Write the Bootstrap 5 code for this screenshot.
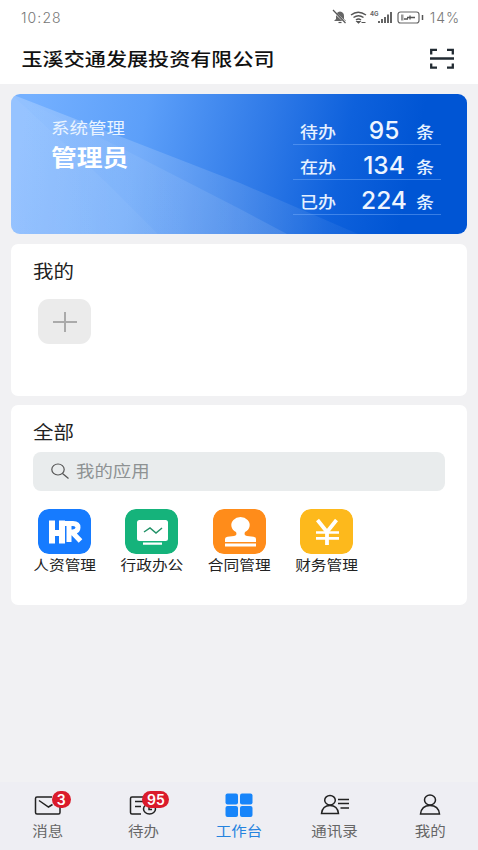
<!DOCTYPE html>
<html lang="zh-CN">
<head>
<meta charset="utf-8">
<meta name="viewport" content="width=device-width, initial-scale=1">
<title>工作台</title>
<link href="https://cdn.jsdelivr.net/npm/bootstrap@5.3.0/dist/css/bootstrap.min.css" rel="stylesheet">
<style>
body{font-family:Inter,"Noto Sans CJK SC",sans-serif;background:#f1f1f3;height:850px;overflow:hidden;color:#222}
svg{display:block;flex:none}
/* wide lettering: glyphs are shorter than they are broad */
.wide{display:inline-block;line-height:1;white-space:nowrap;transform:scaleY(.86);font-family:"Noto Sans CJK SC",sans-serif}
.status{height:34px;padding:0 18px 0 21px;color:#777;font-size:14px;font-weight:300;letter-spacing:.9px}
.status>span:first-child{letter-spacing:1.1px}
.topbar{height:50px;padding:0 24px 0 21.5px}
.topbar .wide{font-size:21.1px;font-weight:500;color:#111}
.content{padding:10px 11px 0 11px}
.hero{height:140px;border-radius:9px;color:#fff}
.hero-art{left:0;top:0}
.who{padding:23.500px 0 0 40px}
.who .dept{font-size:18.5px;color:#eaf4ff}
.who .name{font-size:25.8px;font-weight:700;margin-top:8px}
.stats{width:148px;margin:15.5px 26px 0 0}
.stat{height:35px;border-bottom:1px solid rgba(125,178,250,.45);padding:8px 7px 0 7px;font-size:18px}
.stat .wide{font-weight:500;color:#e6f1ff}
.stat .num{font-size:24.5px;font-weight:500;line-height:1;width:52px;margin-left:16px;color:#eef5ff}
.panel{border-radius:7px;background:#fff;margin-top:9.5px;padding:16px 22px 0}
.panel h2{display:block;font-size:20.5px;margin:0;color:#222;font-weight:400}
.mine{height:152px}.all{height:200px}
.add{width:53px;height:45px;border-radius:11px;background:#ebebeb;margin:19px 0 0 5px}
.search{height:39px;border-radius:8px;background:#e9eced;margin-top:10px;padding-left:18px;gap:8px;color:#8e9293;font-size:18.4px}
.search .wide{margin-top:-1px;margin-left:-1px}
.apps{margin:18px 0 0 -12px}
.app{width:87.3px;font-size:15.7px;color:#222}
.tile{width:53px;height:45px;border-radius:11px;margin-bottom:3.500px}
.tabs{height:68px;background:#eeeef3;font-size:15.5px;color:#666;padding-top:9px}
.tabs .nav-link{color:#666;padding:0;flex:1 1 0;border:0}
.tabs .nav-link.active{color:#2583df}
.tabs .wide{margin-top:4px}
.count{top:0;height:17px;width:19px;border-radius:9px;background:#da1b2b;color:#fff;font-size:14px;font-weight:600;line-height:17px;margin-left:4px}
.count.two{width:27px;margin-left:-1px}
.ico{height:28px}
</style>
<script src="https://cdn.jsdelivr.net/npm/bootstrap@5.3.0/dist/js/bootstrap.bundle.min.js"></script>
</head>
<body class="d-flex flex-column">
<header class="bg-white">
  <div class="status d-flex align-items-center justify-content-between">
    <span>10:28</span>
    <span class="d-flex align-items-center">
      <svg width="95" height="18" viewBox="0 0 95 18" fill="none" stroke="#555" stroke-width="1.2">
        <path d="M3 13 5 11V8q0-4 4-4.500 4 .5 4 4.500v3l2 2Z" fill="#666" stroke="none"/><path d="M7.500 14.500h3" /><path d="m2 3 13 12" stroke="#fff" stroke-width="2"/><path d="m2 2 12.500 13"/>
        <path d="M20 7q7-5.500 15 0M22.500 9.500q5-3.500 10 0M25 12q2.500-2 5 0" stroke-width="1.500"/><path d="m26 13.500 1.500 1.500 1.500-1.500Z" fill="#555"/><path d="M30.500 14.500h4" stroke-width="1"/>
        <text x="39" y="8" font-size="6" font-weight="700" letter-spacing="0" fill="#666" stroke="none" font-family="Inter">4G</text>
        <path d="M48 15v-2M51 15v-4M54 15V9M57 15V6.500M60 15V4" stroke-width="1.800"/>
        <rect x="67" y="4" width="21" height="11" rx="2.500" stroke="#666"/><path d="M91.500 7v5" stroke-width="1.500"/><path d="M70 6.500h2.500v6H70Z" fill="#999" stroke="none"/><path d="M73 11h4M76 9.500h8M79 7.500v4" stroke-width="1.300"/>
      </svg>
      <span class="ms-1">14%</span>
    </span>
  </div>
  <div class="topbar d-flex align-items-center justify-content-between">
    <span class="wide">玉溪交通发展投资有限公司</span>
    <svg width="24" height="22" viewBox="0 0 24 22" fill="none" stroke="#222b33" stroke-width="2.300"><path d="M1.200 6.500V1.800H7M17 1.800h5.800V6.500M1.200 15.500v4.200H7M17 19.700h5.800V15.500M0 10.500h24"/></svg>
  </div>
</header>
<main class="content flex-grow-1">
  <section class="hero position-relative overflow-hidden">
    <svg class="hero-art position-absolute" width="456" height="140" viewBox="0 0 456 140">
      <defs>
        <linearGradient id="sky" gradientUnits="userSpaceOnUse" x1="20" y1="0" x2="400" y2="80"><stop stop-color="#74b0ff"/><stop offset=".3" stop-color="#5c9ff9"/><stop offset=".62" stop-color="#2e79e7"/><stop offset=".82" stop-color="#0e61dc"/><stop offset="1" stop-color="#0055d4"/></linearGradient>
        <linearGradient id="beam" x1="0" x2="1"><stop stop-color="#fff" stop-opacity=".22"/><stop offset=".6" stop-color="#fff" stop-opacity=".12"/><stop offset="1" stop-color="#fff" stop-opacity=".04"/></linearGradient>
        <linearGradient id="beam2" x1="0" x2="1"><stop stop-color="#fff" stop-opacity="0"/><stop offset=".6" stop-color="#fff" stop-opacity=".08"/><stop offset="1" stop-color="#fff" stop-opacity=".1"/></linearGradient>
      </defs>
      <path fill="url(#sky)" d="M0 0h456v140H0z"/>
      <path fill="url(#beam)" d="M0 0 229 89 347 140H0z"/>
      <path fill="url(#beam2)" d="M0 0 114 56 229 115 276 140H0z"/>
      <path fill="#fff" fill-opacity=".045" d="M0 0 95 88 147 140H0z"/>
    </svg>
    <div class="position-relative d-flex justify-content-between">
      <div class="who d-flex flex-column align-items-start">
        <span class="wide dept">系统管理</span>
        <strong class="wide name">管理员</strong>
      </div>
      <div class="stats">
        <div class="stat d-flex justify-content-between align-items-center"><span class="wide">待办</span><span class="num text-center">95</span><span class="wide">条</span></div>
        <div class="stat d-flex justify-content-between align-items-center"><span class="wide">在办</span><span class="num text-center">134</span><span class="wide">条</span></div>
        <div class="stat d-flex justify-content-between align-items-center"><span class="wide">已办</span><span class="num text-center">224</span><span class="wide">条</span></div>
      </div>
    </div>
  </section>
  <section class="panel mine">
    <h2 class="wide">我的</h2>
    <div class="add d-flex align-items-center justify-content-center"><svg width="24" height="20" viewBox="0 0 24 20" stroke="#aaa" stroke-width="2"><path d="M0 10h24M12 0v20"/></svg></div>
  </section>
  <section class="panel all">
    <h2 class="wide">全部</h2>
    <div class="search d-flex align-items-center">
      <svg width="18" height="16" viewBox="0 0 18 16" fill="none" stroke="#555" stroke-width="1.200"><ellipse cx="7" cy="6.500" rx="6.200" ry="5.500"/><path d="m11.500 10.500 6 5"/></svg>
      <span class="wide">我的应用</span>
    </div>
    <div class="apps d-flex">
      <div class="app d-flex flex-column align-items-center">
        <svg class="tile" viewBox="0 0 53 45"><rect width="53" height="45" rx="11" fill="#167bff"/><path d="M14 11.500v23M24 11.500v23M14 24H24" fill="none" stroke="#fff" stroke-width="6"/><path d="M24 14.500h11q5 0 5 4t-5 4.500h-5M31 15v18M34 23l8.500 9" fill="none" stroke="#fff" stroke-width="5"/></svg>
        <span class="wide">人资管理</span></div>
      <div class="app d-flex flex-column align-items-center">
        <svg class="tile" viewBox="0 0 53 45"><rect width="53" height="45" rx="11" fill="#15b37b"/><rect x="12" y="11" width="31" height="21" rx="2.500" fill="#fff"/><path d="m19 23 6-4 6 5 6-5" fill="none" stroke="#239268" stroke-width="1.500"/><path d="M18 34.700h19" stroke="#fff" stroke-width="2.200"/></svg>
        <span class="wide">行政办公</span></div>
      <div class="app d-flex flex-column align-items-center">
        <svg class="tile" viewBox="0 0 53 45"><rect width="53" height="45" rx="11" fill="#ff8c1a"/><path d="M12 33v-3q0-2 2.500-2.300l6.500-.7q3.500-.5 2-4a9.200 8 0 1 1 9 0q-1.500 3.500 2 4l6.500.7q2.500.3 2.500 2.300v3ZM12 34.600h31v2.800H12Z" fill="#fff"/></svg>
        <span class="wide">合同管理</span></div>
      <div class="app d-flex flex-column align-items-center">
        <svg class="tile" viewBox="0 0 53 45"><rect width="53" height="45" rx="11" fill="#fdb91c"/><path d="m17.500 11 9.500 12 9.500-12M27 22v14" fill="none" stroke="#fff" stroke-width="3.800"/><path d="M16 23.500h23M16 29.300h23" stroke="#fff" stroke-width="2.700"/></svg>
        <span class="wide">财务管理</span></div>
    </div>
  </section>
</main>
<nav class="tabs nav flex-nowrap align-items-start">
  <a class="nav-link d-flex flex-column align-items-center position-relative" href="#">
    <svg class="ico" width="28" height="28" viewBox="0 0 28 28" fill="none" stroke="#222" stroke-width="1.500"><path d="M18 6H3Q1.500 6 1.500 7.500v14Q1.500 23 3 23h21.500q1.500 0 1.500-1.500V15M5 9.500l9.500 6.500 4-2.500"/></svg>
    <span class="count position-absolute text-center start-50">3</span><span class="wide">消息</span></a>
  <a class="nav-link d-flex flex-column align-items-center position-relative" href="#">
    <svg class="ico" width="28" height="28" viewBox="0 0 28 28" fill="none" stroke="#222" stroke-width="1.500"><path d="M14 6H3Q1.500 6 1.500 7.500v14Q1.500 23 3 23h9M6 10.500h8M6 15.500h6"/><ellipse cx="20.500" cy="18" rx="6" ry="5"/><path d="M20 15v3.500h3"/></svg>
    <span class="count two position-absolute text-center start-50">95</span><span class="wide">待办</span></a>
  <a class="nav-link active d-flex flex-column align-items-center" href="#">
    <svg class="ico" width="28" height="28" viewBox="0 0 28 28" fill="#1785fa"><rect x=".5" y="2.500" width="12.500" height="11" rx="2"/><rect x="15" y="2.500" width="12.500" height="11" rx="2"/><rect x=".5" y="15" width="12.500" height="11" rx="2"/><rect x="15" y="15" width="12.500" height="11" rx="2"/></svg>
    <span class="wide">工作台</span></a>
  <a class="nav-link d-flex flex-column align-items-center" href="#">
    <svg class="ico" width="30" height="28" viewBox="0 0 30 28" fill="none" stroke="#222" stroke-width="1.500"><ellipse cx="10" cy="9.200" rx="5.300" ry="4.700"/><path d="M1.500 22.500q1-8 8.500-8t8.500 8ZM18 8.500h11M18 12.500h11M20.500 17h8.500"/></svg>
    <span class="wide">通讯录</span></a>
  <a class="nav-link d-flex flex-column align-items-center" href="#">
    <svg class="ico" width="22" height="28" viewBox="0 0 22 28" fill="none" stroke="#222" stroke-width="1.500"><ellipse cx="11" cy="9" rx="5.500" ry="5"/><path d="M1.500 23q1-8.500 9.500-8.500t9.500 8.500Z"/></svg>
    <span class="wide">我的</span></a>
</nav>
</body>
</html>
